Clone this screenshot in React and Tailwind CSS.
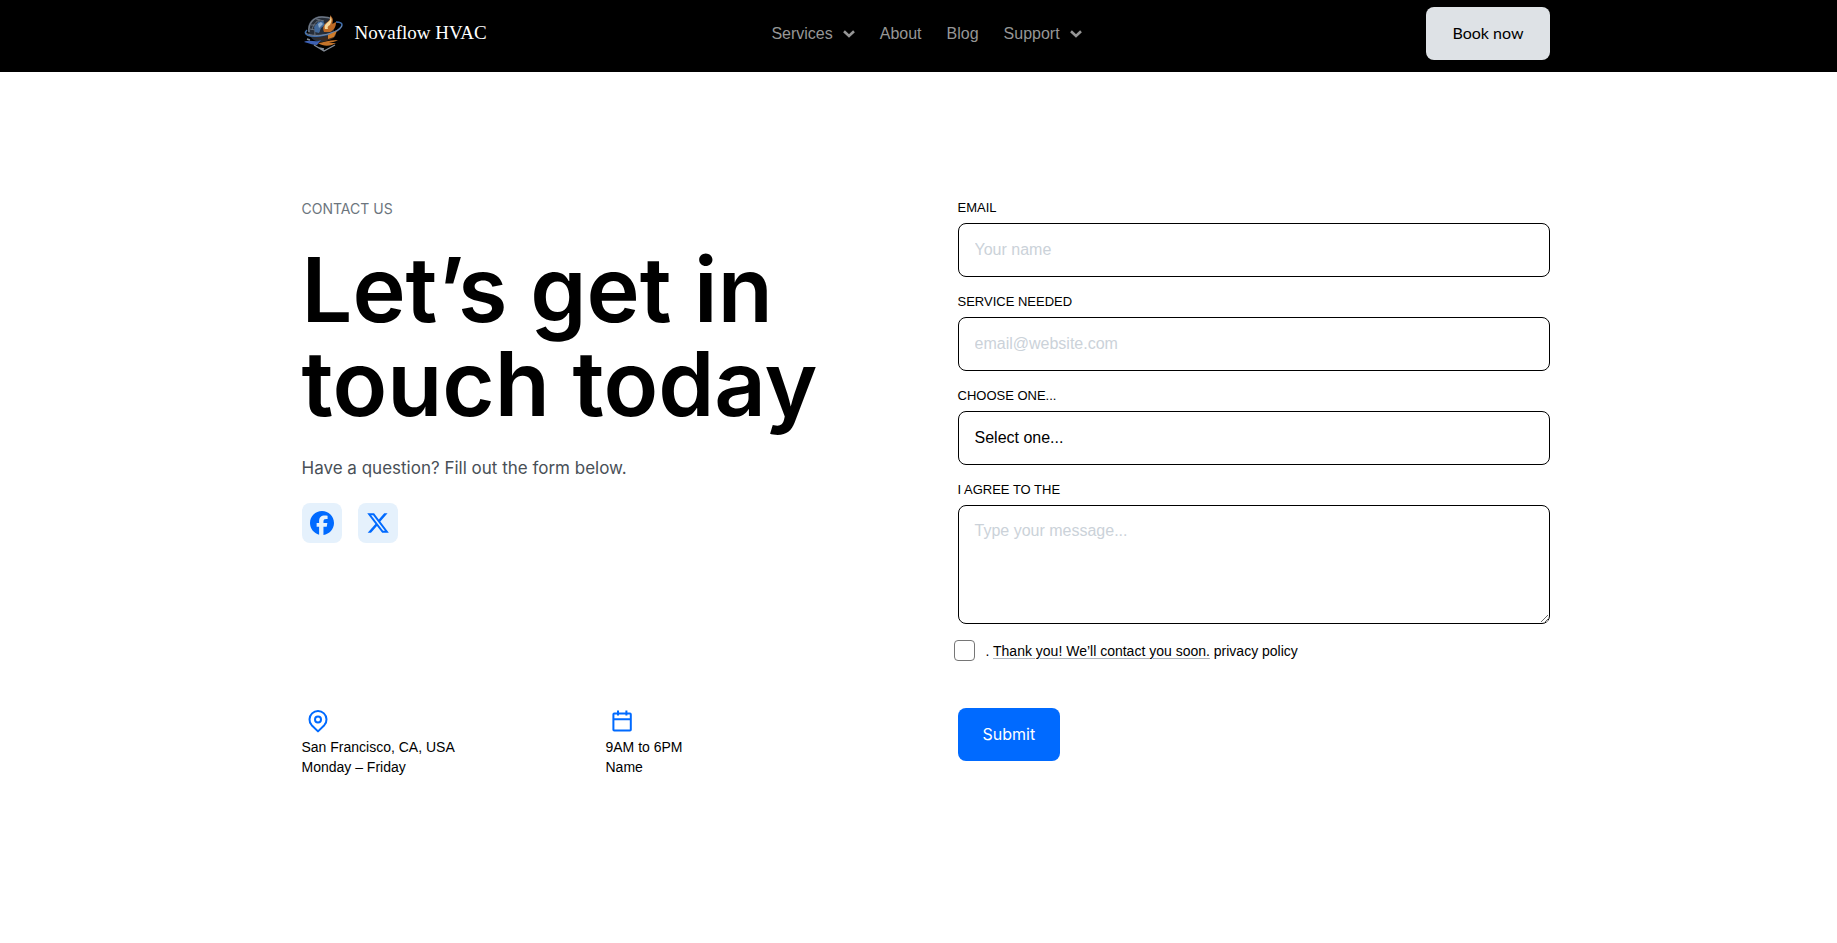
import { FaFacebook, FaXTwitter } from "react-icons/fa6";

const sans = "font-['Inter',sans-serif]";

function Logo() {
  return (
    <svg viewBox="0 0 40 38" className="h-[38px] w-10" fill="none" aria-hidden="true">
      <circle cx="17" cy="14" r="13" fill="#262d37" />
      <path d="M5 17C4 9 9 2 18 2c4 0 7 0 9 2" stroke="#6d7785" strokeWidth="1.6" />
      <path d="M8 15c1-5 4-9 8-10M11 20c-1-6 2-11 6-13M15 6c-1 3-1 5 0 8M7 10h9M6 14l10 2M12 4l8 2" stroke="#66717f" strokeWidth="1" />
      <path d="M10 12l4-5 5-1 2 4-4 3-2 5-4-1z" fill="#41699b" />
      <path d="M14 9l3-2 2 2-4 4z" fill="#8fadcc" />
      <path d="M20 17c-2-5 0-7 2-9 3-2 5-4 4-8 4 4 3 6 2 9l4-2c0 5-2 8-6 10z" fill="#bd6a25" />
      <path d="M21 14c-1-4 1-5 3-7 2-1 3-3 2-6 3 4 1 6 0 9-2 1-3 2-2 4z" fill="#f4d79c" />
      <path d="M3 15c-5 5 3 7 12 6 12-1 22-6 23-11 0-3-3-3-6-3" stroke="#3f6fae" strokeWidth="1.5" />
      <path d="M2 18c4 3 14 3 22 1 7-2 11-4 14-8" stroke="#8b939f" strokeWidth=".8" />
      <path d="M8 22c6 2 16 1 24-5 1 5-4 8-11 9z" fill="#3a2a20" />
      <path d="M24 20l9-4-3 6-6 2z" fill="#d07d2c" />
      <path d="M0 27c6-3 12 1 17-2l-4 5c-4 0-8-2-13-3z" fill="#3d61b4" />
      <path d="M14 28c5 0 9-3 20-3-3 2-7 2-9 3h7c-5 3-12 4-18 0z" fill="#c3732a" />
      <path d="M10 30l10 6 11-6M6 25l-3-1M15 33l5 1" stroke="#858d98" strokeWidth="1.4" />
    </svg>
  );
}

function Chevron() {
  return (
    <svg viewBox="0 0 12 8" className="h-2 w-3" fill="none" aria-hidden="true">
      <path d="M1 1.3 6 6l5-4.7" stroke="currentColor" strokeWidth="2.6" />
    </svg>
  );
}

function Pin() {
  return (
    <svg viewBox="0 0 24 24" className="h-6 w-6" fill="none" stroke="#006aff" strokeWidth="2" aria-hidden="true">
      <path d="M12 22.4 5.7 16.2a8.5 8.5 0 1 1 12.6 0z" strokeLinejoin="round" />
      <circle cx="12" cy="10.6" r="3" />
    </svg>
  );
}

function Calendar() {
  return (
    <svg viewBox="0 0 24 24" className="h-6 w-6" fill="none" stroke="#006aff" strokeWidth="2" aria-hidden="true">
      <rect x="3.4" y="4.6" width="17.4" height="17" rx=".8" />
      <path d="M3.4 10.2h17.4M8 1.6v5M16.4 1.6v5" />
    </svg>
  );
}

function Header() {
  return (
    <header className="bg-black">
      <div className="mx-auto flex h-[72px] max-w-[1264px] items-center justify-between pr-px pb-[5px] pl-[15px]">
        <a href="#" className="flex flex-1 items-center gap-[11px] pl-[2px] font-['Liberation_Serif',serif] text-[19px] text-white">
          <Logo />
          Novaflow HVAC
        </a>
        <nav className="flex items-center gap-[25px] font-['Liberation_Sans',sans-serif] text-base text-[#969696]">
          <button type="button" className="flex items-center gap-[10px]">Services <Chevron /></button>
          <a href="#about">About</a>
          <a href="#blog">Blog</a>
          <button type="button" className="flex items-center gap-[10px]">Support <Chevron /></button>
        </nav>
        <div className="flex flex-1 justify-end">
          <a href="#book" className="rounded-lg bg-[#dee2e6] px-[26px] pt-[13px] pb-[15px] font-['Lato',sans-serif] text-base leading-[25px] text-black">
            Book now
          </a>
        </div>
      </div>
    </header>
  );
}

const box =
  "block w-full rounded-lg border border-black bg-white px-4 font-['Liberation_Sans',sans-serif] text-base text-black placeholder:text-[#cbd2d9]";

function Field({ id, label, children }) {
  return (
    <div>
      <label htmlFor={id} className="mb-[6px] block text-[13px] leading-[18px] uppercase">{label}</label>
      {children}
    </div>
  );
}

function ContactForm() {
  return (
    <form className="font-['Liberation_Sans',sans-serif] text-black" onSubmit={(e) => e.preventDefault()}>
      <div className="flex flex-col gap-4">
        <Field id="email" label="Email">
          <input id="email" type="text" placeholder="Your name" className={`${box} h-[54px]`} />
        </Field>
        <Field id="service" label="Service needed">
          <input id="service" type="text" placeholder="email@website.com" className={`${box} h-[54px]`} />
        </Field>
        <Field id="choice" label="Choose one...">
          <select id="choice" className={`${box} h-[54px] appearance-none`}>
            <option>Select one...</option>
          </select>
        </Field>
        <Field id="message" label="I agree to the">
          <textarea id="message" placeholder="Type your message..." className={`${box} h-[119px] resize-y py-[13px]`} />
        </Field>
      </div>
      <div className="-ml-1 mt-4 flex items-center gap-[11px] text-sm leading-5">
        <input id="agree" type="checkbox" className="h-[21px] w-[21px] appearance-none rounded border border-[#767676] bg-white" />
        <label htmlFor="agree">
          . <a href="#thanks" className="underline decoration-[#adb5bd] decoration-1 underline-offset-2">Thank you! We’ll contact you soon.</a> privacy policy
        </label>
      </div>
      <button type="submit" className={`${sans} mt-[47px] rounded-lg bg-[#006aff] px-[25px] py-[14px] text-base leading-[25px] text-white`}>
        Submit
      </button>
    </form>
  );
}

export default function App() {
  return (
    <div className="min-h-screen bg-white">
      <Header />
      <main className="mx-auto grid max-w-[1264px] grid-cols-2 gap-16 pt-[127px] pr-px pb-20 pl-[15px]">
        <section className="flex flex-col justify-between">
          <div className={sans}>
            <p className="text-sm leading-5 text-[#6c757d]">CONTACT US</p>
            <h1 className="mt-6 text-[90px] leading-[94px] font-semibold text-black">Let’s get in<br />touch today</h1>
            <p className="mt-6 text-[17px] leading-[26px] text-[#495057]">Have a question? Fill out the form below.</p>
            <div className="mt-[22px] flex gap-4">
              <a href="#facebook" aria-label="Facebook" className="flex h-10 w-10 items-center justify-center rounded-lg bg-[#e5f1fc] text-[#006aff]">
                <FaFacebook size={24} />
              </a>
              <a href="#x" aria-label="X" className="flex h-10 w-10 items-center justify-center rounded-lg bg-[#e5f1fc] text-[#006aff]">
                <FaXTwitter size={24} />
              </a>
            </div>
          </div>
          <div className="-mb-4 grid grid-cols-2 gap-4 font-['Liberation_Sans',sans-serif] text-sm leading-5 text-black">
            <div>
              <div className="mb-1 ml-1"><Pin /></div>
              <p>San Francisco, CA, USA</p>
              <p>Monday – Friday</p>
            </div>
            <div>
              <div className="mb-1 ml-1"><Calendar /></div>
              <p>9AM to 6PM</p>
              <p>Name</p>
            </div>
          </div>
        </section>
        <ContactForm />
      </main>
    </div>
  );
}
